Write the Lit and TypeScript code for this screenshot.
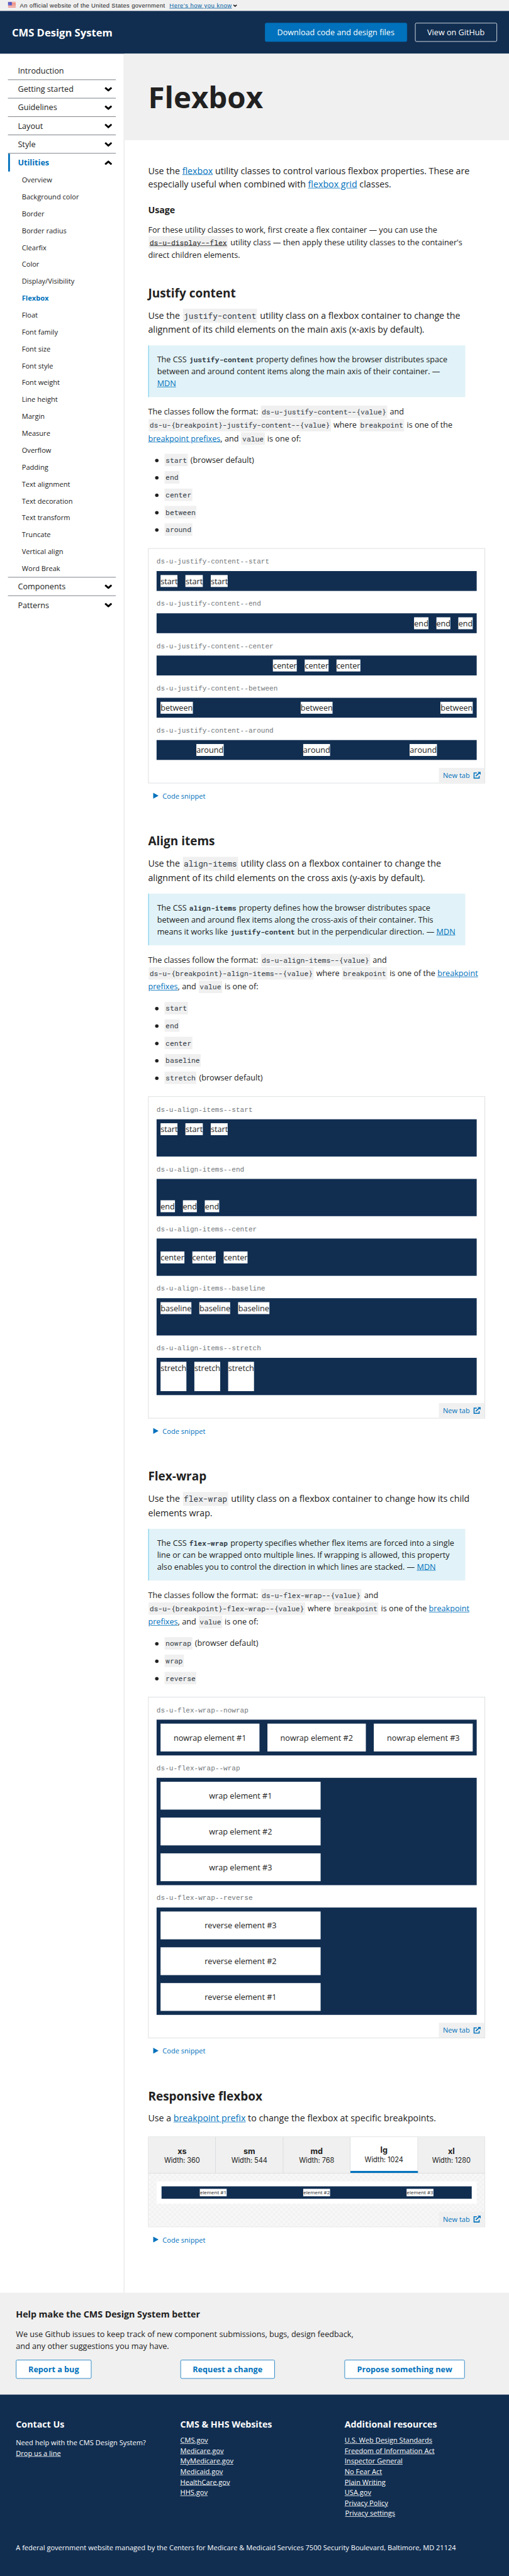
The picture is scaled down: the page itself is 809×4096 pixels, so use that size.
import { LitElement, html, css, svg, nothing, type TemplateResult } from "lit";
import { customElement } from "lit/decorators.js";
import { classMap } from "lit/directives/class-map.js";

const chevron = (cls: string) => html`<svg class=${cls} viewBox="0 0 16 9" fill="none" stroke="#000" stroke-width="3.6" stroke-linejoin="miter">
  <path d="M1.6 1.3 8 7 14.4 1.3"></path>
</svg>`;

const newTabIcon = html`<svg class="new-icon" viewBox="0 0 15 14" fill="none" stroke="#0071bc" stroke-width="2">
  <path d="M7.2 2.2H1.7V12.7H12V8.2"></path>
  <path d="M5.2 8.6 12 2.2" stroke-width="2.3"></path>
  <path d="M8.8 0H15V6Z" fill="#0071bc" stroke="none"></path>
</svg>`;

const flag = html`<svg class="flag" viewBox="0 0 16 11">
  <rect width="16" height="11" fill="#fff"></rect>
  ${[0, 2.4, 4.8, 7.2, 9.8].map((y) => svg`<rect y=${y} width="16" height="1.2" fill="#e0402a"></rect>`)}
  <rect width="7.7" height="6.6" fill="#2a37c0"></rect>
  ${[1.2, 3, 4.8].map((y) => [1.2, 3.2, 5.4].map((x) => svg`<rect x=${x} y=${y} width="0.9" height="0.9" fill="#fff"></rect>`))}
</svg>`;

const utilities = [
  "Overview", "Background color", "Border", "Border radius", "Clearfix", "Color",
  "Display/Visibility", "Flexbox", "Float", "Font family", "Font size", "Font style",
  "Font weight", "Line height", "Margin", "Measure", "Overflow", "Padding",
  "Text alignment", "Text decoration", "Text transform", "Truncate", "Vertical align", "Word Break",
];

interface Demo { name: string; cls: string; items: string[]; }

const three = (s: string) => [s, s, s];
const justifyDemos: Demo[] = ["start", "end", "center", "between", "around"].map((v) => ({
  name: `ds-u-justify-content--${v}`, cls: `j-${v}`, items: three(v),
}));
const alignDemos: Demo[] = ["start", "end", "center", "baseline", "stretch"].map((v) => ({
  name: `ds-u-align-items--${v}`, cls: `tall a-${v}`, items: three(v),
}));
const wrapDemos: Demo[] = ["nowrap", "wrap", "reverse"].map((v) => ({
  name: `ds-u-flex-wrap--${v}`, cls: `padded w-${v}`, items: [1, 2, 3].map((n) => `${v} element #${n}`),
}));

@customElement("app-root")
export class AppRoot extends LitElement {
  static styles = css`
    :host { display: block; width: 809px; height: 4096px; overflow: hidden; background: #fff; }
    * { box-sizing: border-box; }
    h1, h2, h3, p, ul { margin: 0; padding: 0; }
    ul { list-style: none; }
    a { color: #0071bc; text-decoration: underline; }
    .page {
      width: 1024px; height: 5183px; display: flex; flex-direction: column;
      transform: scale(0.790039, 0.790276); transform-origin: 0 0;
      font: 16px/24px "Open Sans", sans-serif; color: #212121; background: #fff;
    }
    .banner {
      height: 22px; flex: none; background: #f0f0f0; display: flex; align-items: center; padding-left: 16px;
      font: 12px/20px "Liberation Sans", Arial, sans-serif; letter-spacing: 0.41px; color: #1b1b1b; white-space: nowrap;
    }
    .banner a { margin-left: 8.7px; color: #005ea2; letter-spacing: 0.62px; }
    .flag { width: 16px; height: 11px; margin: -3px 8px 0 0; }
    .banner-chev { width: 8px; height: 5px; margin-left: 2px; }
    .header {
      height: 86px; flex: none; background: #112e51; display: flex; align-items: center;
      gap: 16px; padding: 0 24px; color: #fff;
    }
    .brand { margin-right: auto; font-size: 21px; font-weight: 700; }
    .btn { height: 38px; border: 1px solid #fff; border-radius: 3px; padding: 0 24px; line-height: 36px; color: #fff; white-space: nowrap; }
    .btn.primary { background: #0071bc; border-color: #0071bc; }
    .body { flex: none; height: 4505px; display: flex; }
    .nav { width: 250px; flex: none; border-right: 1px solid #d6d7d9; padding: 16px 16px 0; }
    .nav-item {
      height: 37px; border-top: 1px solid #5b616b; padding: 0 7px 0 20px;
      display: flex; align-items: center; justify-content: space-between;
    }
    .nav-item.first { height: 36px; border-top: none; }
    .nav-item.current { color: #0071bc; font-weight: 700; box-shadow: inset 4px 0 #0071bc; }
    .nav-chev { width: 16px; height: 9px; }
    .up .nav-chev { transform: rotate(180deg); }
    .sub { height: 34px; line-height: 34px; font-size: 14px; padding-left: 28px; }
    .sub.on { color: #0071bc; font-weight: 700; }
    .main { flex: 1; min-width: 0; }
    .hero { height: 174px; background: #f0f0f0; padding-left: 48px; }
    .hero h1 { font-size: 60px; line-height: 174px; font-weight: 700; }
    .content { width: 726px; padding: 48px 0 0 48px; }
    .lead { font-size: 18px; line-height: 27px; }
    .intro { height: 54px; }
    h3 { font-size: 18px; line-height: 24px; font-weight: 700; }
    .usage { margin-top: 26px; }
    .usage-text { margin-top: 16px; height: 75px; }
    h2 { font-size: 24px; line-height: 31px; font-weight: 700; white-space: nowrap; }
    .section { padding-top: 48px; }
    .section .lead { margin-top: 16px; height: 59px; }
    .section .lead.single { height: 27px; }
    code {
      display: inline-block; margin: 1px; padding: 2px; background: #f0f0f0; color: #323a45;
      font: 14.4px/21px "Roboto Mono", "Liberation Mono", monospace;
    }
    .lead code { font-size: 16.2px; line-height: 24px; }
    .link-code { text-decoration: underline; color: #212121; }
    .quote {
      width: 638px; height: 104px; margin-top: 16px; padding: 16px;
      border-left: 2px solid #9bdaf1; background: #e1f3f8;
    }
    .quote code { display: inline; font-weight: 700; background: none; padding: 0 1px; margin: 0; line-height: 20px; }
    .format { margin-top: 16px; height: 81px; line-height: 24px; }
    .values { margin-top: 16px; padding-bottom: 1px; }
    .values li { height: 27px; margin-bottom: 8px; padding-left: 32px; position: relative; white-space: nowrap; }
    .values li::before {
      content: ""; position: absolute; left: 13.5px; top: 10.5px; width: 7px; height: 7px; border-radius: 50%; background: #212121;
    }
    .example { width: 678px; margin-top: 15px; border: 1px solid #d6d7d9; padding: 0 16px; }
    .label {
      height: 45px; padding-top: 16px; font: 14px/21px "Courier", "Liberation Mono", monospace; color: #71767a;
    }
    .bar { background: #112e51; display: flex; height: 40px; }
    .cell { background: #fff; margin: 8px; }
    .j-end { justify-content: flex-end; }
    .j-center { justify-content: center; }
    .j-between { justify-content: space-between; }
    .j-around { justify-content: space-around; }
    .tall { height: 75px; }
    .a-start { align-items: flex-start; }
    .a-end { align-items: flex-end; }
    .a-center { align-items: center; }
    .a-baseline { align-items: baseline; }
    .a-stretch { align-items: stretch; }
    .padded { height: auto; }
    .padded .cell { padding: 16px 0; text-align: center; flex: 1; }
    .w-wrap { flex-wrap: wrap; }
    .w-reverse { flex-wrap: wrap-reverse; }
    .w-wrap .cell, .w-reverse .cell { flex: 0 0 50%; margin-right: 200px; }
    .example-foot { height: 46px; margin-right: -16px; display: flex; justify-content: flex-end; align-items: flex-end; }
    .new-tab {
      width: 92px; height: 30px; background: #f0f0f0; padding: 0 8px; font-size: 14px; color: #0071bc;
      display: flex; align-items: center; justify-content: space-between; text-decoration: none; white-space: nowrap;
    }
    .new-icon { width: 15px; height: 14px; }
    .snippet { height: 52px; padding-left: 10px; display: flex; align-items: center; gap: 8px; font-size: 14px; color: #0071bc; }
    .tri { width: 11px; height: 12px; margin-top: -3px; }
    .responsive { width: 678px; margin-top: 24px; border: 1px solid #d6d7d9; }
    .tabs { display: flex; height: 73px; border-bottom: 1px solid #d6d7d9; background: #f0f0f0; }
    .tab {
      flex: 1; border-right: 1px solid #d6d7d9; display: flex; flex-direction: column; align-items: center; justify-content: center;
      font: 14px/18px "Inter", sans-serif; letter-spacing: -0.1px; padding-top: 2px;
    }
    .tab:last-child { border-right: none; }
    .tab.on { background: #fff; border-bottom: 4px solid #0071bc; }
    .size { font-size: 16px; line-height: 19px; font-weight: 700; }
    .stage {
      height: 107px; padding: 16px 0 0 16px; display: flex; flex-direction: column; justify-content: space-between;
      background: repeating-conic-gradient(#f8f8f8 0 25%, #f2f2f2 0 50%) 0 0 / 10px 10px;
    }
    .frame { width: 644px; height: 45px; background: #fff; padding: 10px; }
    .mini { height: 25px; background: #112e51; display: flex; justify-content: space-around; align-items: center; font-size: 10px; line-height: 15px; }
    .mini span { background: #fff; }
    .stage .new-tab { align-self: flex-end; }
    .help { flex: none; height: 205px; background: #f0f0f0; padding: 32px 0 0 32px; }
    .help h3 { line-height: 23px; }
    .help p { margin-top: 16px; }
    .cols { display: grid; grid-template-columns: repeat(3, 1fr); }
    .help .cols { margin-top: 16px; }
    .ghost {
      justify-self: start; height: 38px; padding: 0 24px; border: 1px solid #0071bc; border-radius: 3px; background: #fff;
      color: #0071bc; font-weight: 700; line-height: 36px; text-decoration: none; white-space: nowrap;
    }
    .footer { flex: 1; background: #112e51; color: #fff; padding: 48px 0 0 32px; font-size: 14px; line-height: 21px; }
    .footer h3 { line-height: 23px; }
    .footer a { color: #fff; }
    .footer .cols { height: 249px; }
    .contact { margin-top: 15px; }
    .links { margin-top: 10px; }
    .last { padding-left: 1px; }
  `;

  private example(demos: Demo[]) {
    return html`
      <div class="example">
        ${demos.map((d) => html`
          <div class="label">${d.name}</div>
          <div class="bar ${d.cls}">${d.items.map((t) => html`<div class="cell">${t}</div>`)}</div>`)}
        <div class="example-foot">${this.newTab()}</div>
      </div>
      ${this.snippet()}`;
  }

  private newTab() {
    return html`<a class="new-tab"><span>New tab</span>${newTabIcon}</a>`;
  }

  private snippet() {
    return html`<div class="snippet"><svg class="tri" viewBox="0 0 11 12" fill="#0071bc"><path d="M0 0 11 6 0 12Z"></path></svg><span>Code snippet</span></div>`;
  }

  private section(title: string, prop: string, lead: TemplateResult, quote: TemplateResult, link: TemplateResult, values: string[], def: string, demos: Demo[]) {
    return html`
      <section class="section">
        <h2>${title}</h2>
        <p class="lead">${lead}</p>
        <div class="quote"><p>${quote}</p></div>
        <p class="format">The classes follow the format: <code>ds-u-${prop}--{value}</code> and<br><code>ds-u-{breakpoint}-${prop}--{value}</code> where <code>breakpoint</code> is one of the ${link}, and <code>value</code> is one of:</p>
        <ul class="values">
          ${values.map((v) => html`<li><code>${v}</code>${v === def ? " (browser default)" : nothing}</li>`)}
        </ul>
        ${this.example(demos)}
      </section>`;
  }

  private navItem(name: string, open = false) {
    return html`<div class=${classMap({ "nav-item": true, current: open, up: open })}><span>${name}</span>${chevron("nav-chev")}</div>`;
  }

  render() {
    return html`
      <div class="page">
        <div class="banner">${flag}<span>An official website of the United States government</span><a>Here’s how you know</a>${chevron("banner-chev")}</div>
        <header class="header">
          <span class="brand">CMS Design System</span>
          <span class="btn primary">Download code and design files</span>
          <span class="btn">View on GitHub</span>
        </header>
        <div class="body">
          <nav class="nav">
            <div class="nav-item first">Introduction</div>
            ${["Getting started", "Guidelines", "Layout", "Style"].map((n) => this.navItem(n))}
            ${this.navItem("Utilities", true)}
            ${utilities.map((u) => html`<div class=${classMap({ sub: true, on: u === "Flexbox" })}>${u}</div>`)}
            ${["Components", "Patterns"].map((n) => this.navItem(n))}
          </nav>
          <main class="main">
            <div class="hero"><h1>Flexbox</h1></div>
            <div class="content">
              <p class="lead intro">Use the <a>flexbox</a> utility classes to control various flexbox properties. These are<br>especially useful when combined with <a>flexbox grid</a> classes.</p>
              <h3 class="usage">Usage</h3>
              <p class="usage-text">For these utility classes to work, first create a flex container — you can use the<br><code class="link-code">ds-u-display--flex</code> utility class — then apply these utility classes to the container's<br>direct children elements.</p>
              ${this.section("Justify content", "justify-content",
                html`Use the <code>justify-content</code> utility class on a flexbox container to change the<br>alignment of its child elements on the main axis (x-axis by default).`,
                html`The CSS <code>justify-content</code> property defines how the browser distributes space<br>between and around content items along the main axis of their container. —<br><a>MDN</a>`,
                html`<br><a>breakpoint prefixes</a>`,
                ["start", "end", "center", "between", "around"], "start", justifyDemos)}
              ${this.section("Align items", "align-items",
                html`Use the <code>align-items</code> utility class on a flexbox container to change the<br>alignment of its child elements on the cross axis (y-axis by default).`,
                html`The CSS <code>align-items</code> property defines how the browser distributes space<br>between and around flex items along the cross-axis of their container. This<br>means it works like <code>justify-content</code> but in the perpendicular direction. — <a>MDN</a>`,
                html`<a>breakpoint<br>prefixes</a>`,
                ["start", "end", "center", "baseline", "stretch"], "stretch", alignDemos)}
              ${this.section("Flex-wrap", "flex-wrap",
                html`Use the <code>flex-wrap</code> utility class on a flexbox container to change how its child<br>elements wrap.`,
                html`The CSS <code>flex-wrap</code> property specifies whether flex items are forced into a single<br>line or can be wrapped onto multiple lines. If wrapping is allowed, this property<br>also enables you to control the direction in which lines are stacked. — <a>MDN</a>`,
                html`<a>breakpoint<br>prefixes</a>`,
                ["nowrap", "wrap", "reverse"], "nowrap", wrapDemos)}
              <section class="section">
                <h2>Responsive flexbox</h2>
                <p class="lead single">Use a <a>breakpoint prefix</a> to change the flexbox at specific breakpoints.</p>
                <div class="responsive">
                  <div class="tabs">
                    ${[["xs", 360], ["sm", 544], ["md", 768], ["lg", 1024], ["xl", 1280]].map(([n, w]) => html`
                      <div class=${classMap({ tab: true, on: n === "lg" })}><span class="size">${n}</span><span>Width: ${w}</span></div>`)}
                  </div>
                  <div class="stage">
                    <div class="frame"><div class="mini">${[1, 2, 3].map((n) => html`<span>element #${n}</span>`)}</div></div>
                    ${this.newTab()}
                  </div>
                </div>
                ${this.snippet()}
              </section>
            </div>
          </main>
        </div>
        <section class="help">
          <h3>Help make the CMS Design System better</h3>
          <p>We use Github issues to keep track of new component submissions, bugs, design feedback,<br>and any other suggestions you may have.</p>
          <div class="cols">
            ${["Report a bug", "Request a change", "Propose something new"].map((t) => html`<a class="ghost">${t}</a>`)}
          </div>
        </section>
        <footer class="footer">
          <div class="cols">
            <div><h3>Contact Us</h3><p class="contact">Need help with the CMS Design System?<br><a>Drop us a line</a></p></div>
            <div><h3>CMS &amp; HHS Websites</h3>
              <ul class="links">${["CMS.gov", "Medicare.gov", "MyMedicare.gov", "Medicaid.gov", "HealthCare.gov", "HHS.gov"].map((t) => html`<li><a>${t}</a></li>`)}</ul></div>
            <div><h3>Additional resources</h3>
              <ul class="links">${["U.S. Web Design Standards", "Freedom of Information Act", "Inspector General", "No Fear Act", "Plain Writing", "USA.gov", "Privacy Policy"].map((t) => html`<li><a>${t}</a></li>`)}
                <li class="last"><a>Privacy settings</a></li></ul></div>
          </div>
          <p>A federal government website managed by the Centers for Medicare &amp; Medicaid Services 7500 Security Boulevard, Baltimore, MD 21124</p>
        </footer>
      </div>`;
  }
}
